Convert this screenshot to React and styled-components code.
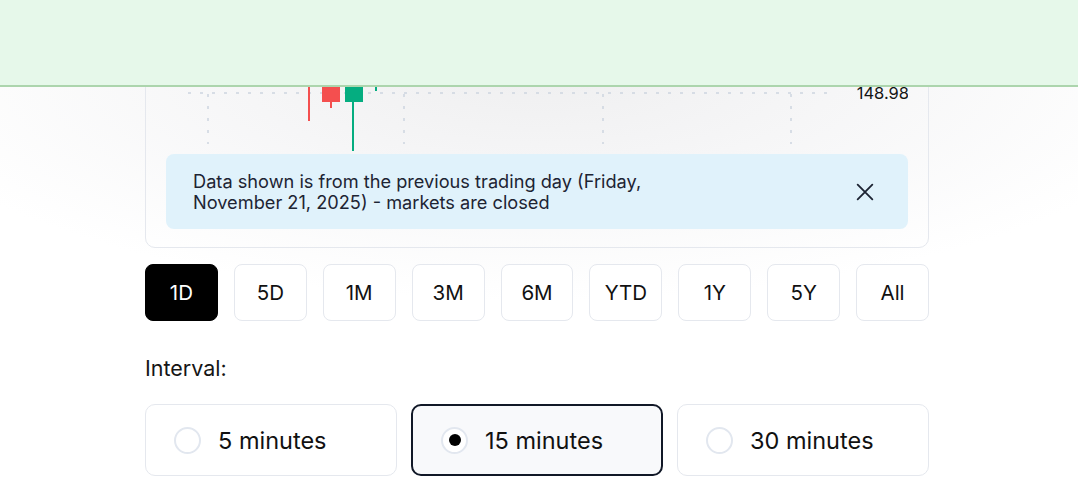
import React, { useState } from 'react'
import styled, { createGlobalStyle } from 'styled-components'

const GlobalStyle = createGlobalStyle`
  html, body {
    margin: 0;
    padding: 0;
    background: #fff;
    font-family: Inter, "Noto Sans", sans-serif;
    color: #111;
  }
`

const Page = styled.div`
  min-height: 502px;
  background: radial-gradient(ellipse 62% 230px at 50% 70px, #efeff0 0%, #f6f6f7 45%, #ffffff 100%);
  overflow: hidden;
`

const Banner = styled.div`
  position: fixed;
  top: 0;
  left: 0;
  right: 0;
  height: 85px;
  background: #e6f8ea;
  border-bottom: 2px solid #acd5ad;
  z-index: 10;
`

const Column = styled.div`
  width: 784px;
  margin-left: calc(50% - 394px);
  padding-top: 33px;
  display: flex;
  flex-direction: column;
`

const Card = styled.div`
  border: 1.5px solid #e5e8ee;
  border-radius: 10px;
  padding: 20px 20px 18px;
  display: flex;
  flex-direction: column;
`

const Chart = styled.svg`
  display: block;
  width: 742px;
  height: 100px;
`

const Alert = styled.div`
  display: flex;
  align-items: center;
  justify-content: space-between;
  background: #e0f2fb;
  border-radius: 8px;
  height: 75px;
  padding: 0 32px 0 27px;
  box-sizing: border-box;
`

const AlertText = styled.p`
  margin: 0;
  font-size: 18.2px;
  line-height: 21px;
  color: #1d2433;
  width: 480px;
`

const Close = styled.button`
  border: 0;
  background: none;
  padding: 0;
  display: flex;
  color: #1d2433;
  cursor: pointer;
`

const Periods = styled.div`
  display: grid;
  grid-template-columns: repeat(9, 1fr);
  gap: 16px;
  margin-top: 16px;
`

const PeriodButton = styled.button`
  height: 57px;
  border-radius: 8px;
  border: 1.5px solid ${p => (p.active ? '#000' : '#e5e8ee')};
  background: ${p => (p.active ? '#000' : '#fff')};
  color: ${p => (p.active ? '#fff' : '#111')};
  font-family: Inter, sans-serif;
  font-size: 20.5px;
  cursor: pointer;
`

const Label = styled.div`
  margin-top: 34px;
  font-size: 21.5px;
  color: #151515;
`

const Intervals = styled.div`
  display: grid;
  grid-template-columns: repeat(3, 1fr);
  gap: 14px;
  margin-top: 23px;
`

const Option = styled.label`
  height: 72px;
  box-sizing: border-box;
  display: flex;
  align-items: center;
  gap: 17px;
  padding-left: 28px;
  border-radius: 10px;
  border: ${p => (p.selected ? '2px solid #111827' : '1.5px solid #e5e8ee')};
  background: ${p => (p.selected ? '#f8f9fb' : '#fff')};
  font-size: 23.5px;
  color: #111;
  cursor: pointer;
`

const Radio = styled.span`
  width: 27px;
  height: 27px;
  box-sizing: border-box;
  border-radius: 50%;
  border: 2px solid #e2e7ef;
  background: #fff;
  display: flex;
  align-items: center;
  justify-content: center;

  &::after {
    content: '';
    width: 12px;
    height: 12px;
    border-radius: 50%;
    background: #000;
    display: ${p => (p.selected ? 'block' : 'none')};
  }
`

const periods = ['1D', '5D', '1M', '3M', '6M', 'YTD', '1Y', '5Y', 'All']
const intervals = ['5 minutes', '15 minutes', '30 minutes']

function CandleChart() {
  const grid = '#cdd5e0'
  return (
    <Chart viewBox="0 0 742 100">
      <line x1="22" y1="39" x2="664" y2="39" stroke={grid} strokeWidth="1.5" strokeDasharray="3 9" />
      {[42, 238, 437, 625].map(x => (
        <line key={x} x1={x} y1="28" x2={x} y2="90" stroke={grid} strokeWidth="1.5" strokeDasharray="3 9" />
      ))}
      <rect x="142" y="20" width="2" height="47" fill="#f44f4f" />
      <rect x="164" y="40" width="2" height="14" fill="#f44f4f" />
      <rect x="156" y="20" width="18" height="28" fill="#f44f4f" />
      <rect x="186" y="40" width="2" height="57" fill="#05ad80" />
      <rect x="179" y="20" width="18" height="28" fill="#05ad80" />
      <rect x="209" y="20" width="2" height="17" fill="#05ad80" />
      <text x="743" y="45" textAnchor="end" fontSize="16.5" fill="#151515" fontFamily="Inter, sans-serif">
        148.98
      </text>
    </Chart>
  )
}

export default function App() {
  const [period, setPeriod] = useState('1D')
  const [interval, setInterval] = useState('15 minutes')
  return (
    <Page>
      <GlobalStyle />
      <Banner />
      <Column>
        <Card>
          <CandleChart />
          <Alert>
            <AlertText>
              Data shown is from the previous trading day (Friday, November 21, 2025) - markets are closed
            </AlertText>
            <Close aria-label="Close">
              <svg width="22" height="22" viewBox="0 0 24 24" fill="none" stroke="currentColor" strokeWidth="2" strokeLinecap="round">
                <path d="M4 4l16 16M20 4L4 20" />
              </svg>
            </Close>
          </Alert>
        </Card>
        <Periods>
          {periods.map(p => (
            <PeriodButton key={p} active={p === period} onClick={() => setPeriod(p)}>
              {p}
            </PeriodButton>
          ))}
        </Periods>
        <Label>Interval:</Label>
        <Intervals>
          {intervals.map(i => (
            <Option key={i} selected={i === interval} onClick={() => setInterval(i)}>
              <Radio selected={i === interval} />
              {i}
            </Option>
          ))}
        </Intervals>
      </Column>
    </Page>
  )
}
